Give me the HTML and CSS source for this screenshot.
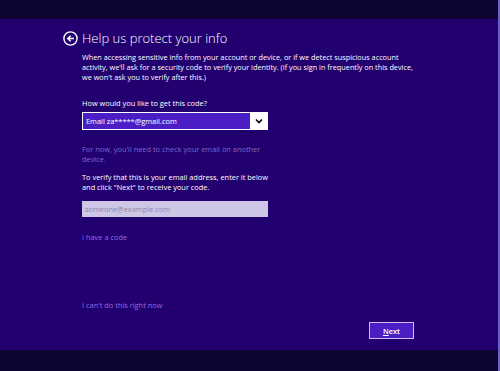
FILE: index.html
```html
<!DOCTYPE html>
<html>
<head>
  <title>Help us protect your info</title>
  <meta name="viewport" content="width=device-width, initial-scale=1.0">
  <link rel="stylesheet" href="styles.css">
</head>
<body>
  <div class="top-band"></div>

  <div class="main">
    <div class="header">
      <button class="back-btn" aria-label="Back">
        <svg width="15" height="15" viewBox="0 0 15 15">
          <circle cx="7.5" cy="7.5" r="6.6" fill="none" stroke="#fff" stroke-width="1.4"/>
          <path d="M11 7.5H5.2M7.6 4.8L4.8 7.5l2.8 2.7" fill="none" stroke="#fff" stroke-width="1.5"/>
        </svg>
      </button>
      <h1>Help us protect your info</h1>
    </div>

    <div class="content">
      <p class="intro">When accessing sensitive info from your account or device, or if we detect suspicious account<br>
        activity, we'll ask for a security code to verify your identity. (If you sign in frequently on this device,<br>
        we won't ask you to verify after this.)</p>

      <label class="field-label" for="method">How would you like to get this code?</label>
      <div class="select">
        <span id="method">Email za*****@gmail.com</span>
        <span class="select-arrow">
          <svg width="8" height="6" viewBox="0 0 8 6">
            <path d="M1 1.5l3 3 3-3" fill="none" stroke="#000" stroke-width="1.6"/>
          </svg>
        </span>
      </div>

      <p class="note">For now, you'll need to check your email on another device.</p>

      <p class="text">To verify that this is your email address, enter it below and click "Next" to receive your code.</p>

      <input type="text" class="email-input" placeholder="someone@example.com">

      <a class="link code-link" href="#">I have a code</a>

      <a class="link later-link" href="#">I can't do this right now</a>
    </div>

    <div class="footer">
      <button class="button"><u>N</u>ext</button>
    </div>
  </div>

  <div class="bottom-band"></div>
</body>
</html>
```

FILE: styles.css
```css
html, body {
  height: 100%;
}

body {
  margin: 0;
  font-family: "Open Sans", "Noto Sans", sans-serif;
  background-color: #0e0431;
  color: #fff;
  display: flex;
  flex-direction: column;
  border-right: 2px solid #6f5fc4;
  box-sizing: border-box;
  overflow: hidden;
}

.top-band {
  height: 19px;
  flex-shrink: 0;
}

.bottom-band {
  height: 21px;
  flex-shrink: 0;
}

.main {
  flex: 1;
  background-color: #230070;
  display: flex;
  flex-direction: column;
  padding: 11px 0 0 63px;
}

.header {
  display: flex;
  align-items: center;
  gap: 4px;
}

.back-btn {
  width: 15px;
  height: 15px;
  padding: 0;
  border: none;
  background: none;
  display: flex;
}

h1 {
  margin: 0;
  font-size: 13px;
  font-weight: 300;
  line-height: 16px;
}

.content {
  padding-left: 19px;
  width: 360px;
  display: flex;
  flex-direction: column;
  align-items: flex-start;
}

.intro {
  margin: 6px 0 0;
  font-size: 7.3px;
  line-height: 10px;
  width: 360px;
}

.field-label {
  margin-top: 16px;
  font-size: 7.4px;
  line-height: 10px;
}

.select {
  margin-top: 4px;
  width: 186px;
  height: 18px;
  box-sizing: border-box;
  border: 1px solid #fff;
  background-color: #4a1ec4;
  display: flex;
  align-items: center;
  font-size: 7.4px;
}

.select span:first-child {
  flex: 1;
  padding-left: 3px;
}

.select-arrow {
  width: 17px;
  height: 100%;
  background-color: #fff;
  display: flex;
  align-items: center;
  justify-content: center;
}

.note {
  margin: 14px 0 0;
  width: 190px;
  font-size: 7.4px;
  line-height: 10px;
  color: #7b69c6;
}

.text {
  margin: 8px 0 0;
  width: 192px;
  font-size: 7.4px;
  line-height: 10px;
}

.email-input {
  margin-top: 9px;
  width: 186px;
  height: 16px;
  box-sizing: border-box;
  border: none;
  background-color: #cdc6e6;
  font-family: inherit;
  font-size: 7.4px;
  padding: 0 3px;
  color: #333;
}

.email-input::placeholder {
  color: #8e86a8;
}

.link {
  font-size: 7.4px;
  line-height: 10px;
  color: #8a6ee4;
  text-decoration: none;
}

.code-link {
  margin-top: 15px;
}

.later-link {
  margin-top: 58px;
}

.footer {
  margin-top: auto;
  padding: 0 84px 11px 0;
  display: flex;
  justify-content: flex-end;
}

.button {
  width: 45px;
  height: 17px;
  padding: 0;
  border: 1px solid #c8bff0;
  background-color: #4a1ec4;
  color: #fff;
  font-family: inherit;
  font-size: 7.4px;
  font-weight: 600;
}
```
